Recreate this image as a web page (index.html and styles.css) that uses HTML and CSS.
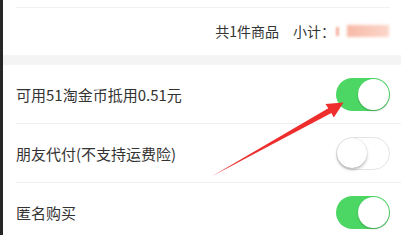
FILE: index.html
```html
<!DOCTYPE html>
<html lang="zh-CN">
<head>
<meta charset="utf-8">
<title>订单</title>
<link rel="stylesheet" href="styles.css">
</head>
<body>
<div class="page">
  <div class="summary">
    <div class="hairline"></div>
    <div class="summary-row">
      <span class="count">共1件商品</span>
      <span class="subtotal">小计：</span>
      <span class="yen"></span>
      <span class="price"></span>
    </div>
  </div>
  <div class="band"></div>
  <div class="list">
    <div class="row">
      <span class="label">可用51淘金币抵用0.51元</span>
      <span class="switch on"><span class="knob"></span></span>
    </div>
    <div class="row">
      <span class="label">朋友代付(不支持运费险)</span>
      <span class="switch off"><span class="knob"></span></span>
    </div>
    <div class="row last">
      <span class="label">匿名购买</span>
      <span class="switch on"><span class="knob"></span></span>
    </div>
  </div>
  <svg class="arrow" width="401" height="235" viewBox="0 0 401 235">
    <polygon points="343.5,102.5 325.5,104 328.3,108.2 211.5,176.5 331.4,113 333.8,117.5" fill="#ee2d2d"/>
  </svg>
</div>
</body>
</html>
```

FILE: styles.css
```css
html, body {
  margin: 0;
  padding: 0;
  background: #ffffff;
}
body {
  width: 401px;
  height: 235px;
  overflow: hidden;
  font-family: "Noto Sans CJK SC", "Noto Sans", sans-serif;
  color: #333333;
}
.page {
  position: relative;
  width: 398px;
  height: 235px;
  border-left: 3px solid #262626;
  background: #ffffff;
}
.summary {
  height: 55px;
  padding-left: 13px;
  padding-right: 11px;
  display: flex;
  flex-direction: column;
}
.hairline {
  margin-top: 7px;
  height: 1px;
  background: #f2f2f2;
}
.summary-row {
  display: flex;
  align-items: center;
  justify-content: flex-end;
  height: 50px;
  margin-top: -1px;
  font-size: 14px;
  line-height: 20px;
}
.count {
  margin-right: 14px;
}
.subtotal {
  margin-right: 1px;
}
.yen {
  width: 3px;
  height: 9px;
  background: #f4b19d;
  filter: blur(1px);
  margin-right: 8px;
  margin-top: 2px;
}
.price {
  width: 42px;
  height: 12px;
  background: linear-gradient(90deg, #f7b9a6 0%, #f9c5b5 40%, #fbd6ca 100%);
  filter: blur(1.5px);
  margin-right: 1px;
}
.band {
  height: 10px;
  background: #f4f4f4;
}
.list {
  padding-left: 13px;
}
.row {
  height: 58px;
  display: flex;
  align-items: center;
  justify-content: space-between;
  padding-right: 11px;
  border-bottom: 1px solid #efefef;
}
.row.last {
  border-bottom: none;
}
.label {
  font-size: 15px;
  line-height: 20px;
  color: #333333;
  margin-top: 2px;
}
.switch {
  position: relative;
  width: 54px;
  height: 33px;
  border-radius: 17px;
  box-sizing: border-box;
  display: flex;
  align-items: center;
}
.switch.on {
  background: #4cd764;
  justify-content: flex-end;
  padding-right: 1px;
}
.switch.off {
  background: #ffffff;
  border: 1.5px solid #e4e4e4;
  justify-content: flex-start;
}
.knob {
  width: 31px;
  height: 31px;
  border-radius: 50%;
  background: #ffffff;
  box-sizing: border-box;
}
.switch.on .knob {
  box-shadow: 0 1px 2px rgba(0, 0, 0, 0.25);
}
.switch.off .knob {
  width: 30px;
  height: 30px;
  box-shadow: 0 2px 3px rgba(0, 0, 0, 0.25), 0 0 1px rgba(0, 0, 0, 0.2);
}
.arrow {
  position: absolute;
  left: -3px;
  top: 0;
  pointer-events: none;
}
```
